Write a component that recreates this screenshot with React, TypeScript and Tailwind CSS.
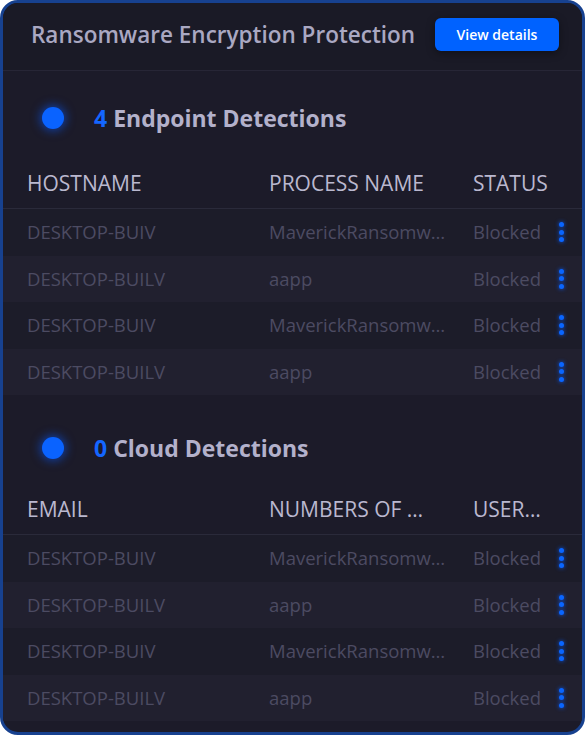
import React from "react";

type Row = { a: string; b: string; c: string };

const rows: Row[] = [
  { a: "DESKTOP-BUIV", b: "MaverickRansomware.exe", c: "Blocked" },
  { a: "DESKTOP-BUILV", b: "aapp", c: "Blocked" },
  { a: "DESKTOP-BUIV", b: "MaverickRansomware.exe", c: "Blocked" },
  { a: "DESKTOP-BUILV", b: "aapp", c: "Blocked" },
];

function Kebab() {
  return (
    <div className="flex flex-col items-center gap-[2.5px]">
      <span className="w-[5px] h-[5px] rounded-full bg-[#0a66ff] shadow-[0_0_4px_#0a5cff]" />
      <span className="w-[5px] h-[5px] rounded-full bg-[#0a66ff] shadow-[0_0_4px_#0a5cff]" />
      <span className="w-[5px] h-[5px] rounded-full bg-[#0a66ff] shadow-[0_0_4px_#0a5cff]" />
    </div>
  );
}

function Section({
  count,
  title,
  cols,
  top,
  gap,
  lastCol,
}: {
  count: number;
  title: string;
  cols: [string, string, string];
  top: string;
  gap: string;
  lastCol: string;
}) {
  return (
    <section className={top}>
      <div className="flex items-center h-[30px] pl-[39px]">
        <span className="w-[22px] h-[22px] rounded-full bg-[#0a63ff] shadow-[0_0_10px_2px_rgba(10,90,255,0.55)]" />
        <h2 className="ml-[30px] text-[23px] font-bold text-[#b3b1cb]">
          <span className="text-[#1466ff]">{count}</span> {title}
        </h2>
      </div>

      <div className={`${gap} grid grid-cols-[242px_204px_1fr] items-center h-[49px] pl-6 pr-[18px] border-b border-[#2a2a3a] text-[21px] text-[#bab8cf]`}>
        <div className="truncate pr-4">{cols[0]}</div>
        <div className="truncate w-[156px]">{cols[1]}</div>
        <div className={lastCol}>{cols[2]}</div>
      </div>

      {rows.map((r, i) => (
        <div
          key={i}
          className={`grid grid-cols-[242px_204px_1fr_auto] items-center h-[46.5px] pl-6 pr-[18px] text-[18.5px] text-[#4c4b62] ${
            i % 2 === 0 ? "bg-[#1c1c29]" : "bg-[#21202f]"
          }`}
        >
          <div className="truncate">{r.a}</div>
          <div className="truncate w-[184px]">{r.b}</div>
          <div className="whitespace-nowrap">{r.c}</div>
          <Kebab />
        </div>
      ))}
    </section>
  );
}

export default function App() {
  return (
    <div className="w-[585px] h-[735px] bg-white" style={{ fontFamily: "'Open Sans', Lato, sans-serif" }}>
      <div className="w-full h-full rounded-[18px] border-[3px] border-[#17418f] bg-[#1c1b29] overflow-hidden">
        <header className="flex items-center justify-between h-[68px] pb-[4px] pl-[28px] pr-[23px] bg-[#1a1a26] border-b border-[#272636]">
          <h1 className="text-[22.5px] font-semibold text-[#aaa8c2]">Ransomware Encryption Protection</h1>
          <button className="w-[124px] h-[33px] rounded-[6px] bg-[#0062ff] text-white text-[14px] font-semibold shadow-[0_2px_8px_rgba(0,0,0,0.4)]">
            View details
          </button>
        </header>

        <Section
          count={4}
          title="Endpoint Detections"
          cols={["HOSTNAME", "PROCESS NAME", "STATUS"]}
          top="pt-[32px]"
          gap="mt-[27px]"
          lastCol="whitespace-nowrap"
        />
        <Section
          count={0}
          title="Cloud Detections"
          cols={["EMAIL", "NUMBERS OF USERS", "USERNAME"]}
          top="pt-[38px]"
          gap="mt-[23px]"
          lastCol="truncate w-[74px]"
        />
      </div>
    </div>
  );
}
